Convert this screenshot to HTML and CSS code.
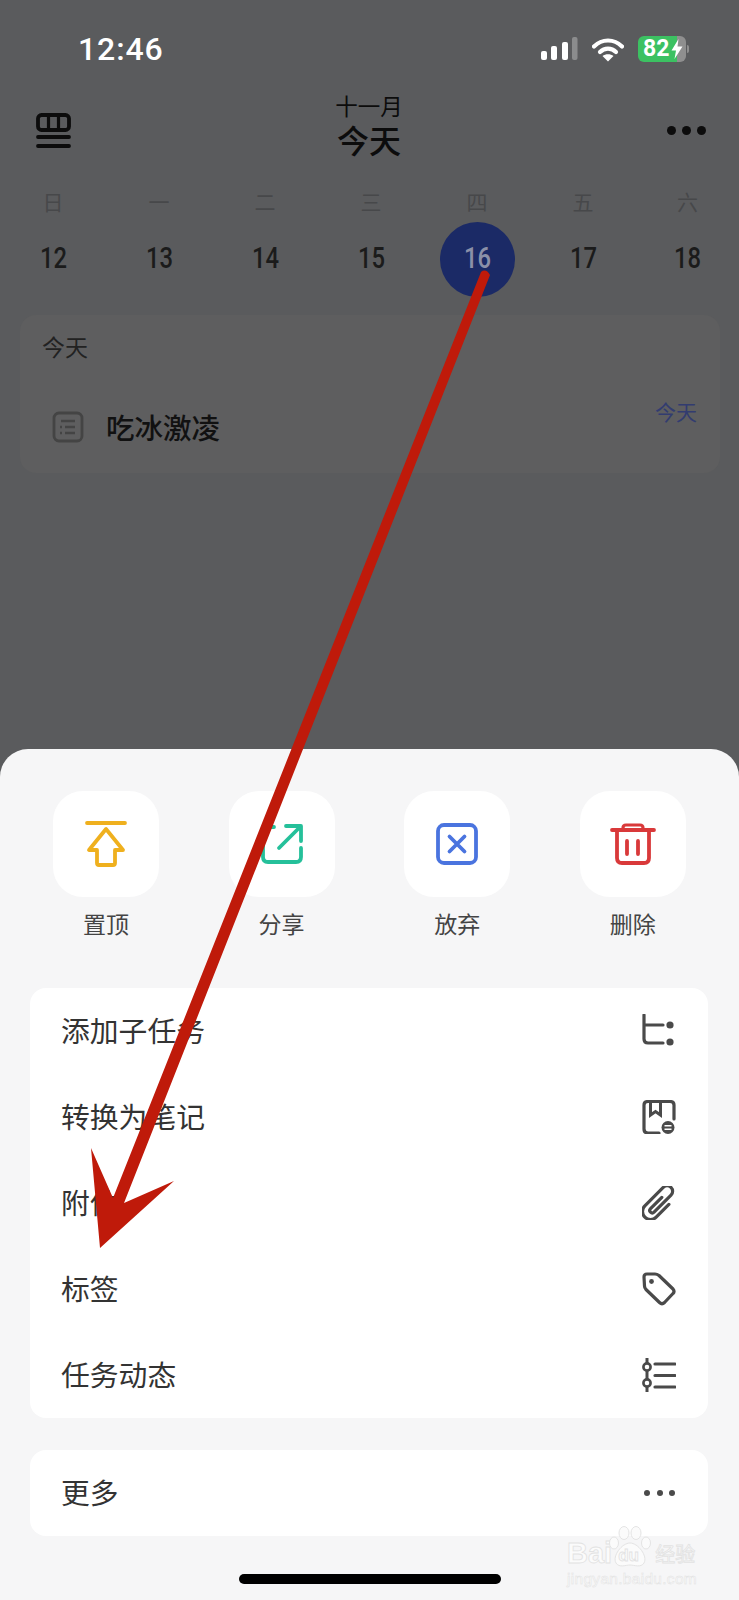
FILE: index.html
```html
<!DOCTYPE html>
<html lang="zh-CN">
<head>
    <meta charset="UTF-8">
    <meta name="viewport" content="width=device-width, initial-scale=1.0">
    <title>今天</title>
    <link rel="stylesheet" href="styles.css">
</head>
<body>
    <div class="screen">
        <div class="backdrop">
            <div class="status-bar">
                <div class="time">12:46</div>
                <div class="status-icons">
                    <svg class="signal" width="37" height="24" viewBox="0 0 37 24">
                        <rect x="0" y="14" width="6" height="9" rx="2" fill="#fff"/>
                        <rect x="10" y="9" width="6" height="14" rx="2" fill="#fff"/>
                        <rect x="21" y="5" width="6" height="18" rx="2" fill="#fff"/>
                        <rect x="31" y="0" width="5.5" height="23" rx="2" fill="#8b8c8d"/>
                    </svg>
                    <svg class="wifi" width="32" height="25" viewBox="0 0 32 25">
                        <path d="M2 9.5 C10 1.5 22 1.5 30 9.5" fill="none" stroke="#fff" stroke-width="4.2" stroke-linecap="round"/>
                        <path d="M8 15 C12.5 10.5 19.5 10.5 24 15" fill="none" stroke="#fff" stroke-width="4.2" stroke-linecap="round"/>
                        <path d="M10.5 19 C13.5 16.5 18.5 16.5 21.5 19 L16 24.5 Z" fill="#fff"/>
                    </svg>
                    <div class="battery">
                        <span class="battery-num">82</span>
                        <svg width="12" height="20" viewBox="0 0 12 20"><path d="M7.5 0 L0.5 11.5 H5 L3.5 20 L11.5 7.5 H6.5 Z" fill="#fff"/></svg>
                    </div>
                    <div class="battery-nub"></div>
                </div>
            </div>

            <div class="nav">
                <svg width="35" height="35" viewBox="0 0 35 35">
                    <rect x="2" y="2" width="31" height="15" rx="3.5" fill="none" stroke="#0c0c0c" stroke-width="3.8"/>
                    <path d="M12.5 2 V17 M22.5 2 V17" stroke="#0c0c0c" stroke-width="3.2"/>
                    <path d="M2 24 H33 M2 33 H33" stroke="#0c0c0c" stroke-width="3.8" stroke-linecap="round"/>
                </svg>
                <div class="nav-title">
                    <div class="month">十一月</div>
                    <div class="today">今天</div>
                </div>
                <div class="nav-dots"><i></i><i></i><i></i></div>
            </div>

            <div class="week">
                <div>日</div><div>一</div><div>二</div><div>三</div><div>四</div><div>五</div><div>六</div>
            </div>
            <div class="days">
                <div class="day"><span>12</span></div>
                <div class="day"><span>13</span></div>
                <div class="day"><span>14</span></div>
                <div class="day"><span>15</span></div>
                <div class="day active"><span>16</span></div>
                <div class="day"><span>17</span></div>
                <div class="day"><span>18</span></div>
            </div>

            <div class="task-card">
                <div class="task-card-title">今天</div>
                <div class="task-row">
                    <svg width="32" height="32" viewBox="0 0 32 32">
                        <rect x="2" y="2" width="28" height="28" rx="5" fill="none" stroke="#444" stroke-width="2.8"/>
                        <path d="M9 10 H23 M13 16 H23 M13 22 H23" stroke="#444" stroke-width="2.6"/>
                        <path d="M8 16 H10 M8 22 H10" stroke="#444" stroke-width="2.6"/>
                    </svg>
                    <div class="task-name">吃冰激凌</div>
                    <div class="task-date">今天</div>
                </div>
            </div>
        </div>

        <div class="sheet">
            <div class="actions">
                <div class="action">
                    <div class="tile">
                        <svg width="44" height="48" viewBox="0 0 44 48">
                            <path d="M3 3 H41" stroke="#efb01e" stroke-width="3.8" stroke-linecap="round"/>
                            <path d="M22 9 L5 30 H13 V43 Q13 45 15 45 H29 Q31 45 31 43 V30 H39 Z" fill="none" stroke="#efb01e" stroke-width="3.8" stroke-linejoin="round"/>
                        </svg>
                    </div>
                    <div class="action-label">置顶</div>
                </div>
                <div class="action">
                    <div class="tile">
                        <svg width="44" height="44" viewBox="0 0 44 44">
                            <path d="M14 5 H8 Q3 5 3 10 V35 Q3 40 8 40 H36 Q41 40 41 35 V26" fill="none" stroke="#25c09a" stroke-width="3.8" stroke-linecap="round"/>
                            <path d="M19 26 L40 5 M26 4 H41 V19" fill="none" stroke="#25c09a" stroke-width="3.8" stroke-linecap="round" stroke-linejoin="round"/>
                        </svg>
                    </div>
                    <div class="action-label">分享</div>
                </div>
                <div class="action">
                    <div class="tile">
                        <svg width="42" height="42" viewBox="0 0 42 42">
                            <rect x="2" y="2" width="38" height="38" rx="6" fill="none" stroke="#4a74df" stroke-width="3.8"/>
                            <path d="M13.5 13.5 L28.5 28.5 M28.5 13.5 L13.5 28.5" stroke="#4a74df" stroke-width="3.8" stroke-linecap="round"/>
                        </svg>
                    </div>
                    <div class="action-label">放弃</div>
                </div>
                <div class="action">
                    <div class="tile">
                        <svg width="46" height="42" viewBox="0 0 46 42">
                            <path d="M2 7 H44" stroke="#d9393a" stroke-width="3.8" stroke-linecap="round"/>
                            <path d="M13 7 V5 Q13 2 16 2 H30 Q33 2 33 5 V7" fill="none" stroke="#d9393a" stroke-width="3.2"/>
                            <path d="M7 7 V35 Q7 40 12 40 H34 Q39 40 39 35 V7" fill="none" stroke="#d9393a" stroke-width="3.8"/>
                            <path d="M17 18 V31 M28 18 V31" stroke="#d9393a" stroke-width="3.8" stroke-linecap="round"/>
                        </svg>
                    </div>
                    <div class="action-label">删除</div>
                </div>
            </div>

            <div class="menu">
                <div class="menu-row">
                    <span>添加子任务</span>
                    <svg width="34" height="34" viewBox="0 0 34 34">
                        <path d="M2 1 V25 Q2 29 6 29 H21 M2 11 H21" fill="none" stroke="#4a4a4a" stroke-width="3.2" stroke-linecap="round"/>
                        <circle cx="28" cy="11" r="3.6" fill="#4a4a4a"/>
                        <circle cx="28" cy="28" r="3.6" fill="#4a4a4a"/>
                    </svg>
                </div>
                <div class="menu-row">
                    <span>转换为笔记</span>
                    <svg width="34" height="34" viewBox="0 0 34 34">
                        <path d="M17 33 H6 Q2 33 2 29 V5 Q2 1.5 6 1.5 H28 Q32 1.5 32 5 V19" fill="none" stroke="#4a4a4a" stroke-width="3.2" stroke-linecap="round"/>
                        <path d="M8.5 2 V15 L13.5 11.5 L18.5 15 V2" fill="none" stroke="#4a4a4a" stroke-width="3"/>
                        <circle cx="26" cy="27.5" r="6.5" fill="#4a4a4a"/>
                        <path d="M22.5 25.8 H29.5 M22.5 29.2 H29.5" stroke="#fff" stroke-width="1.5"/>
                    </svg>
                </div>
                <div class="menu-row">
                    <span>附件</span>
                    <svg width="34" height="34" viewBox="-17 -17 34 34">
                        <path transform="rotate(45)" d="M8 -6 V12 a8 8 0 0 1 -16 0 V-14 a5.5 5.5 0 0 1 11 0 V10 a2.5 2.5 0 0 1 -5 0 V-6" fill="none" stroke="#4a4a4a" stroke-width="3.2" stroke-linecap="round"/>
                    </svg>
                </div>
                <div class="menu-row">
                    <span>标签</span>
                    <svg width="34" height="34" viewBox="0 0 34 34">
                        <path d="M2 5 Q2 2 5 2 H13 Q15 2 17 3.5 L31 17 Q33 19.5 31 21.5 L22.5 30.5 Q20 33 17.5 30.5 L4 17.5 Q2.5 16 2.5 14 Z" fill="none" stroke="#4a4a4a" stroke-width="3.2" stroke-linejoin="round"/>
                        <circle cx="9.5" cy="9.5" r="2.4" fill="#4a4a4a"/>
                    </svg>
                </div>
                <div class="menu-row">
                    <span>任务动态</span>
                    <svg width="34" height="34" viewBox="0 0 34 34">
                        <path d="M5 0 V34" stroke="#4a4a4a" stroke-width="3"/>
                        <circle cx="5" cy="9" r="3.6" fill="#fff" stroke="#4a4a4a" stroke-width="2.6"/>
                        <circle cx="5" cy="25" r="3.6" fill="#fff" stroke="#4a4a4a" stroke-width="2.6"/>
                        <path d="M13 6 H33 M13 17.5 H33 M13 29 H33" stroke="#4a4a4a" stroke-width="3.2" stroke-linecap="round"/>
                    </svg>
                </div>
            </div>

            <div class="menu">
                <div class="menu-row">
                    <span>更多</span>
                    <div class="more-dots"><i></i><i></i><i></i></div>
                </div>
            </div>

            <div class="home-bar"></div>
        </div>

        <!-- watermark -->
        <div class="watermark">
            <div class="wm-logo">
                <span class="wm-bai">Bai</span>
                <span class="wm-du">
                    <svg width="44" height="42" viewBox="0 0 44 42">
                        <ellipse cx="6" cy="17" rx="4.5" ry="6" fill="#fbfbfb" stroke="#e4e4e4"/>
                        <ellipse cx="16" cy="7" rx="5" ry="6.5" fill="#fbfbfb" stroke="#e4e4e4"/>
                        <ellipse cx="28" cy="7" rx="5" ry="6.5" fill="#fbfbfb" stroke="#e4e4e4"/>
                        <ellipse cx="38" cy="17" rx="4.5" ry="6" fill="#fbfbfb" stroke="#e4e4e4"/>
                        <path d="M22 17 C14 17 4 30 8 37 C11 42 18 39 22 39 C26 39 33 42 36 37 C40 30 30 17 22 17 Z" fill="#fbfbfb" stroke="#e4e4e4"/>
                    </svg>
                    <b>du</b>
                </span>
                <span class="wm-cn">经验</span>
            </div>
            <div class="wm-url">jingyan.baidu.com</div>
        </div>

        <!-- red annotation arrow -->
        <svg class="arrow" width="739" height="1600" viewBox="0 0 739 1600">
            <path d="M481 272 Q486 268 490 275 L124 1203 L174 1181 L100 1248 L91 1148 L113 1198 Z" fill="#bf1a0a"/>
        </svg>
    </div>
</body>
</html>
```

FILE: styles.css
```css
* {
    box-sizing: border-box;
}

body, html {
    margin: 0;
    padding: 0;
    font-family: 'Noto Sans CJK SC', 'Noto Sans', sans-serif;
    background-color: #5a5b5d;
}

.screen {
    position: relative;
    width: 739px;
    height: 1600px;
    overflow: hidden;
    display: flex;
    flex-direction: column;
    justify-content: space-between;
}

/* top part, dimmed */
.status-bar {
    height: 96px;
    padding: 2px 50px 0 78px;
    display: flex;
    justify-content: space-between;
    align-items: center;
}

.time {
    font-family: Roboto, sans-serif;
    font-size: 32px;
    font-weight: 500;
    color: #fff;
    letter-spacing: 0.9px;
}

.status-icons {
    display: flex;
    align-items: center;
}

.signal {
    margin-right: 14px;
}

.wifi {
    margin-right: 14px;
}

.battery {
    width: 48px;
    height: 26px;
    border-radius: 6px;
    background: linear-gradient(to right, #3cc162 81%, #8f8f8f 81%);
    display: flex;
    align-items: center;
    padding-left: 5px;
    gap: 2px;
}

.battery-num {
    font-family: Roboto, sans-serif;
    font-size: 23px;
    font-weight: 700;
    color: #fff;
    line-height: 26px;
}

.battery-nub {
    width: 2px;
    height: 8px;
    margin-left: 1px;
    background-color: #8f8f8f;
    border-radius: 0 2px 2px 0;
}

.nav {
    height: 68px;
    padding: 0 33px 0 36px;
    display: flex;
    justify-content: space-between;
    align-items: center;
}

.nav-title {
    margin-top: -6px;
    text-align: center;
    color: #0c0c0c;
}

.month {
    margin-top: -2px;
    margin-bottom: 2px;
    font-size: 22.5px;
    line-height: 24px;
}

.today {
    font-size: 32px;
    font-weight: 500;
    line-height: 40px;
}

.nav-dots {
    display: flex;
    gap: 6px;
}

.nav-dots i {
    width: 9px;
    height: 9px;
    border-radius: 50%;
    background-color: #0c0c0c;
}

.week {
    display: grid;
    grid-template-columns: repeat(6, 106px) 103px;
    margin-top: 24px;
    height: 26px;
    line-height: 26px;
    text-align: center;
    font-size: 21px;
    font-weight: 400;
    color: #47484a;
}

.days {
    display: grid;
    grid-template-columns: repeat(6, 106px) 103px;
    margin-top: 8px;
    height: 75px;
}

.day {
    width: 75px;
    height: 75px;
    justify-self: center;
    border-radius: 50%;
    display: flex;
    align-items: center;
    justify-content: center;
    font-family: Roboto, sans-serif;
    font-size: 29px;
    font-weight: 500;
    color: #1b1b1b;
}

.day span {
    display: block;
    margin-bottom: 4px;
    transform: scaleX(0.82);
}

.day.active {
    background-color: #1b2a66;
    color: #8b90a8;
}

.task-card {
    margin: 18px 19px 0 20px;
    height: 158px;
    padding: 16px 21px 0 22px;
    border-radius: 16px;
    background-color: #5e5e5f;
}

.task-card-title {
    font-size: 23px;
    line-height: 30px;
    color: #222;
}

.task-row {
    display: flex;
    align-items: center;
    margin-top: 36px;
    padding-left: 10px;
}

.task-name {
    margin-left: 22px;
    font-size: 28.5px;
    font-weight: 500;
    line-height: 40px;
    color: #111;
}

.task-date {
    margin-left: auto;
    margin-right: 2px;
    margin-bottom: 32px;
    font-size: 21px;
    line-height: 28px;
    color: #323c70;
}

/* bottom sheet */
.sheet {
    height: 851px;
    padding-top: 42px;
    border-radius: 28px 28px 0 0;
    background-color: #f6f6f7;
}

.actions {
    display: flex;
    gap: 69.6px;
    padding-left: 53px;
}

.action {
    width: 106px;
    text-align: center;
}

.tile {
    height: 106px;
    border-radius: 30px;
    background-color: #fff;
    display: flex;
    align-items: center;
    justify-content: center;
}

.action-label {
    margin-top: 11px;
    font-size: 23px;
    line-height: 30px;
    color: #444;
}

.menu {
    margin: 50px 31px 0 30px;
    border-radius: 16px;
    background-color: #fff;
}

.menu + .menu {
    margin-top: 32px;
}

.menu-row {
    height: 86px;
    padding: 0 32px 0 31px;
    display: flex;
    justify-content: space-between;
    align-items: center;
    font-size: 28.8px;
    color: #333;
}

.menu-row span {
    margin-bottom: 3px;
}

.more-dots {
    display: flex;
    gap: 6.5px;
    padding-right: 1px;
}

.more-dots i {
    width: 6px;
    height: 6px;
    border-radius: 50%;
    background-color: #4a4a4a;
}

.home-bar {
    width: 262px;
    height: 10px;
    margin: 38px 0 0 239px;
    border-radius: 5px;
    background-color: #000;
}

/* overlays */
.watermark {
    position: absolute;
    left: 567px;
    top: 1520px;
    width: 134px;
    color: #fbfbfb;
    -webkit-text-stroke: 0.8px #e2e2e2;
}

.wm-logo {
    display: flex;
    align-items: flex-end;
    height: 48px;
}

.wm-bai {
    font-family: 'Liberation Sans', sans-serif;
    font-size: 29px;
    font-weight: 700;
    line-height: 30px;
}

.wm-du {
    position: relative;
    width: 44px;
    height: 42px;
    margin-left: -4px;
}

.wm-du b {
    position: absolute;
    left: 10px;
    top: 20px;
    font-family: 'Liberation Sans', sans-serif;
    font-size: 17px;
    line-height: 20px;
}

.wm-cn {
    margin-left: 3px;
    font-size: 20px;
    line-height: 28px;
    white-space: nowrap;
}

.wm-url {
    margin-top: 2px;
    font-family: 'Liberation Sans', sans-serif;
    font-size: 15.5px;
    line-height: 18px;
    letter-spacing: 0.3px;
    white-space: nowrap;
    -webkit-text-stroke: 0.5px #e2e2e2;
}

.arrow {
    position: absolute;
    left: 0;
    top: 0;
    pointer-events: none;
}
```
